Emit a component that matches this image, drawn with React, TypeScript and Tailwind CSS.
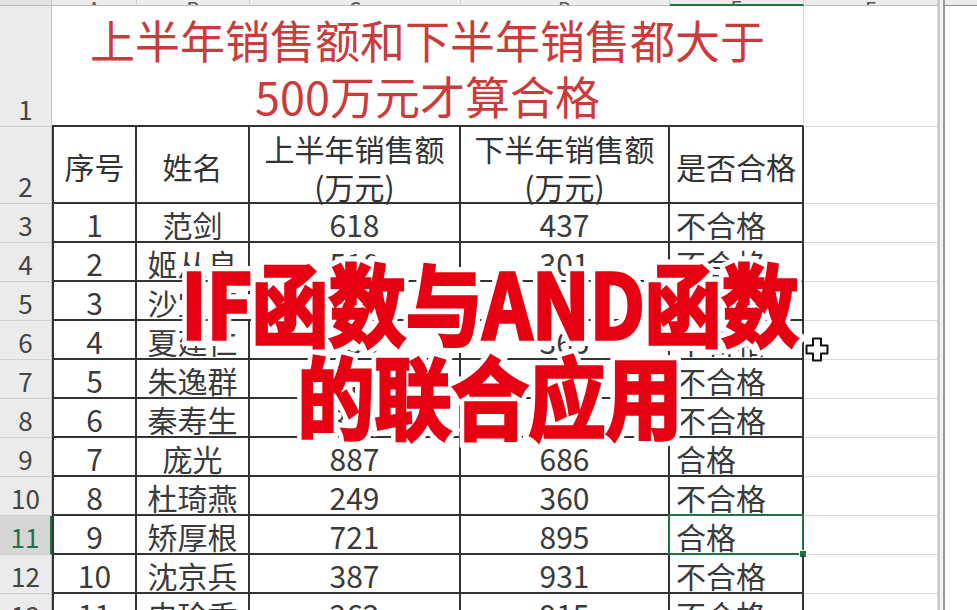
import React from "react";

type Row = { n: number; a: string; b: string; c: string; d: string; e: string };

const rows: Row[] = [
  { n: 3, a: "1", b: "范剑", c: "618", d: "437", e: "不合格" },
  { n: 4, a: "2", b: "姬从良", c: "510", d: "301", e: "不合格" },
  { n: 5, a: "3", b: "沙宝亮", c: "636", d: "473", e: "不合格" },
  { n: 6, a: "4", b: "夏建仁", c: "930", d: "365", e: "不合格" },
  { n: 7, a: "5", b: "朱逸群", c: "479", d: "598", e: "不合格" },
  { n: 8, a: "6", b: "秦寿生", c: "812", d: "406", e: "不合格" },
  { n: 9, a: "7", b: "庞光", c: "887", d: "686", e: "合格" },
  { n: 10, a: "8", b: "杜琦燕", c: "249", d: "360", e: "不合格" },
  { n: 11, a: "9", b: "矫厚根", c: "721", d: "895", e: "合格" },
  { n: 12, a: "10", b: "沈京兵", c: "387", d: "931", e: "不合格" },
  { n: 13, a: "11", b: "史珍香", c: "262", d: "915", e: "不合格" },
];

const colLetters = ["A", "B", "C", "D", "E", "F"];

function RowHead({ n, selected }: { n: number; selected?: boolean }) {
  return (
    <div
      className={
        "flex items-end justify-center pb-[1px] border-b border-b-[#d0d0d0] text-[26px] leading-[32px] " +
        (selected
          ? "bg-[#d6d6d6] text-[#217346] border-r-2 border-r-[#217346]"
          : "bg-[#ebebeb] text-[#444] border-r border-r-[#c4c4c4]")
      }
    >
      {n}
    </div>
  );
}

export default function App() {
  return (
    <div className="w-[977px] h-[610px] overflow-hidden bg-white flex font-['Noto_Sans_CJK_SC','Noto_Sans',sans-serif]">
      <div className="relative w-[938px] h-[610px] overflow-hidden shrink-0">
        <div className="grid grid-cols-[52px_85px_113px_211px_209px_134px_134px] grid-rows-[6px_121px_77px_repeat(11,39px)]">
          {/* column header strip */}
          <div className="bg-[#e3e3e3] border-r border-r-[#c4c4c4] border-b border-b-[#bdbdbd]" />
          {colLetters.map((l, i) => (
            <div
              key={l}
              className={
                "bg-[#ececec] border-r border-r-[#cfcfcf] overflow-hidden flex justify-center items-end " +
                (i === 4 ? "border-b-2 border-b-[#217346] bg-[#dcdcdc]" : "border-b border-b-[#bdbdbd]")
              }
            >
              <span className="text-[20px] leading-none text-[#555] mb-[-14px]">{l}</span>
            </div>
          ))}

          {/* row 1 */}
          <RowHead n={1} />
          <div className="col-span-5 flex flex-col items-center justify-center pt-[5px] text-[45px] leading-[56px] text-[#cc3b3b] border-r border-r-[#d9d9d9] border-b-2 border-b-[#333]">
            <div>上半年销售额和下半年销售都大于</div>
            <div>500万元才算合格</div>
          </div>
          <div className="border-r border-r-[#dadada] border-b border-b-[#dadada]" />

          {/* row 2 */}
          <RowHead n={2} />
          <div className="flex items-center justify-center pt-[4px] text-[30px] text-[#333] border-l-2 border-l-[#333] border-r-2 border-r-[#333] border-b-2 border-b-[#333]">
            序号
          </div>
          <div className="flex items-center justify-center pt-[4px] text-[30px] text-[#333] border-r-2 border-r-[#333] border-b-2 border-b-[#333]">
            姓名
          </div>
          <div className="flex flex-col items-center justify-center pt-[5px] text-[30px] leading-[38px] text-[#333] border-r-2 border-r-[#333] border-b-2 border-b-[#333]">
            <div>上半年销售额</div>
            <div>(万元)</div>
          </div>
          <div className="flex flex-col items-center justify-center pt-[5px] text-[30px] leading-[38px] text-[#333] border-r-2 border-r-[#333] border-b-2 border-b-[#333]">
            <div>下半年销售额</div>
            <div>(万元)</div>
          </div>
          <div className="flex items-center justify-start pl-[6px] pt-[4px] text-[30px] text-[#333] border-r-2 border-r-[#333] border-b-2 border-b-[#333]">
            是否合格
          </div>
          <div className="border-r border-r-[#dadada] border-b border-b-[#dadada]" />

          {rows.map((r) => {
            const sel = r.n === 11;
            const cell = "flex items-center pt-[3px] text-[30px] leading-[34px] text-[#3a3a3a] border-r-2 border-r-[#333] border-b-2 border-b-[#333]";
            return (
              <React.Fragment key={r.n}>
                <RowHead n={r.n} selected={sel} />
                <div className={cell + " justify-center border-l-2 border-l-[#333]"}>{r.a}</div>
                <div className={cell + " justify-center"}>{r.b}</div>
                <div className={cell + " justify-center"}>{r.c}</div>
                <div className={cell + " justify-center"}>{r.d}</div>
                <div className={cell + " justify-start pl-[6px] relative"}>
                  {r.e}
                  {sel && (
                    <>
                      <div className="absolute left-[-2px] top-[-2px] right-[-2px] bottom-[-2px] border-2 border-[#217346]" />
                      <div className="absolute right-[-5px] bottom-[-5px] w-[8px] h-[8px] bg-[#217346] border border-white" />
                    </>
                  )}
                </div>
                <div className="border-r border-r-[#dadada] border-b border-b-[#dadada]" />
              </React.Fragment>
            );
          })}
        </div>

        {/* overlay title */}
        <div className="absolute left-[160px] top-[254px] w-[660px] scale-y-[1.15] origin-top">
          <div className="relative text-center font-bold text-[77px] leading-[81px] tracking-[0px]">
            <div className="absolute inset-0 text-white [-webkit-text-stroke:12px_white]" aria-hidden="true">
              <div>IF函数与AND函数</div>
              <div>的联合应用</div>
            </div>
            <div className="relative text-[#e60012] [-webkit-text-stroke:3px_#e60012]">
              <div>IF函数与AND函数</div>
              <div>的联合应用</div>
            </div>
          </div>
        </div>

        {/* cursor */}
        <svg className="absolute left-[805px] top-[337px]" width="24" height="25" viewBox="0 0 24 25">
          <path
            d="M8 1.5 H16 V8.5 H22.5 V16.5 H16 V23.5 H8 V16.5 H1.5 V8.5 H8 Z"
            fill="white"
            stroke="#111"
            strokeWidth="2"
            strokeLinejoin="round"
          />
        </svg>
      </div>

      {/* right edge / scrollbar */}
      <div className="w-[7px] h-[610px] shrink-0 bg-[#f3f3f3] border-l-2 border-l-[#c8c8c8] border-r-2 border-r-[#9a9a9a]" />
      <div className="flex-1 h-[610px] flex flex-col bg-white">
        <div className="h-[6px] bg-[#ececec] border-b border-b-[#8f8f8f]" />
      </div>
    </div>
  );
}
